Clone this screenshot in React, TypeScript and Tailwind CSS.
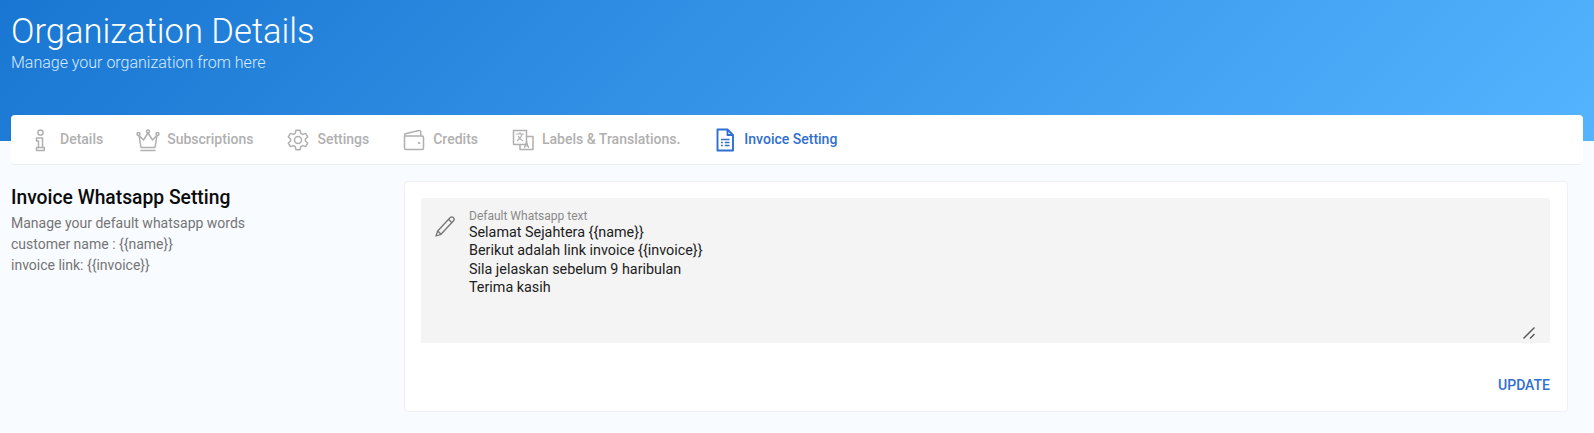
import React from "react";

const stroke = { fill: "none", stroke: "currentColor", strokeWidth: 1.5, strokeLinecap: "round" as const, strokeLinejoin: "round" as const };

const InfoIcon = () => (
  <svg width="24" height="24" viewBox="0 0 24 24" {...stroke}>
    <circle cx="11.500" cy="4.500" r="2.600" />
    <path d="M7.500 10h6v9.500h1.800v3H7.500v-3h2v-6.500h-2z" />
    <path d="M9.500 19.500h4" />
  </svg>
);
const CrownIcon = () => (
  <svg width="24" height="24" viewBox="0 0 24 24" {...stroke}>
    <circle cx="12" cy="3.500" r="1.500" />
    <circle cx="2.500" cy="6" r="1.500" />
    <circle cx="21.500" cy="6" r="1.500" />
    <path d="M12 5l-4.500 7L3 7.500 5 19.500h14l2-12L16.500 12 12 5z" />
    <path d="M5 22.500h14" />
  </svg>
);
const GearIcon = () => (
  <svg width="24" height="24" viewBox="0 0 24 24" {...stroke}>
    <path d="M9.900 2.300h4.200l.6 3 2 1.100 2.900-1 2.100 3.600-2.300 2v2l2.300 2-2.100 3.600-2.900-1-2 1.100-.6 3H9.900l-.6-3-2-1.100-2.900 1-2.100-3.600 2.300-2v-2l-2.300-2 2.100-3.600 2.900 1 2-1.100z" />
    <circle cx="12" cy="12" r="3.500" />
  </svg>
);
const WalletIcon = () => (
  <svg width="24" height="24" viewBox="0 0 24 24" {...stroke}>
    <path d="M2.500 8.500V20a1.500 1.500 0 0 0 1.500 1.500h16a1.500 1.500 0 0 0 1.500-1.500V9.500A1.500 1.500 0 0 0 20 8H4C3 8 2.500 7.500 2.500 7c0-.6.4-1 1-1.200L17 2.500c1-.2 1.800.4 1.800 1.500V8" />
    <path d="M16.800 15h.6" strokeWidth="2" />
  </svg>
);
const TranslateIcon = () => (
  <svg width="24" height="24" viewBox="0 0 24 24" {...stroke}>
    <path d="M2.500 2.500h13v14h-13z" />
    <path d="M9 16.500v5h13V8.500h-6.500" />
    <path d="M5.500 6h7M9 4.500V6M11 6c-.5 3-2.200 5-4.500 6.500M7.500 8.500c.7 1.800 2.300 3 4 4" strokeWidth="1.200" />
    <path d="M13.500 19.500l2-5.500 2 5.500M14.200 18h2.600" strokeWidth="1.200" />
  </svg>
);
const InvoiceIcon = () => (
  <svg width="24" height="24" viewBox="0 0 24 24" fill="none" stroke="currentColor" strokeWidth="1.900" strokeLinejoin="round">
    <path d="M4.500 1.500h10l5.500 5.500v15.500H4.500z" />
    <path d="M14.500 1.500V7H20" />
    <path d="M8 11.500h8.500M8 14.500h1.800M11.800 14.500h4.700M8 17.500h1.800M11.800 17.500h4.700" strokeWidth="1.500" />
  </svg>
);
const PencilIcon = () => (
  <svg width="24" height="24" viewBox="0 0 24 24" fill="none" stroke="currentColor" strokeWidth="1.300" strokeLinejoin="round">
    <path d="M17 2.700c1-1 2.500-1 3.400-.1s.9 2.400-.1 3.400L8 19.300 3 21 4.700 16z" />
    <path d="M15.500 4.300l3.300 3.300M4.700 16L8 19.300" />
  </svg>
);

const tabs = [
  { label: "Details", icon: <InfoIcon /> },
  { label: "Subscriptions", icon: <CrownIcon /> },
  { label: "Settings", icon: <GearIcon /> },
  { label: "Credits", icon: <WalletIcon /> },
  { label: "Labels & Translations.", icon: <TranslateIcon /> },
];

const Tab = ({ label, icon, active }: { label: string; icon: React.ReactNode; active?: boolean }) => (
  <div className={`flex h-full items-center gap-[7px] pr-[17px] pl-[16px] text-[14px] font-medium ${active ? "text-[#2f6fd0]" : "text-[#b0b0b0]"}`}>
    {icon}
    <span>{label}</span>
  </div>
);

export default function App() {
  return (
    <div className="min-h-[433px] overflow-hidden bg-[#f8fbff] font-['Roboto',sans-serif]">
      <header className="h-[141px] bg-[linear-gradient(135deg,#1976d2,#54b4ff)] px-[11px] pt-[9px] text-white">
        <h1 className="text-[34.6px] leading-[44px] font-light">Organization Details</h1>
        <p className="text-[16px] leading-[20px] font-light text-[#d8ecff]">Manage your organization from here</p>
      </header>

      <nav className="relative mx-[11px] -mt-[26px] flex h-[50px] items-center rounded-[4px] border-b border-[#e8edf2] bg-white px-[2px]">
        {tabs.map((t) => (
          <Tab key={t.label} label={t.label} icon={t.icon} />
        ))}
        <Tab label="Invoice Setting" icon={<InvoiceIcon />} active />
      </nav>

      <main className="mt-[16px] flex pr-[26px] pl-[11px]">
        <section className="w-[393px] shrink-0 pt-[4px]">
          <h2 className="text-[19.3px] leading-[26px] font-medium text-[#0b0b0b]">Invoice Whatsapp Setting</h2>
          <p className="mt-[2px] text-[14px] leading-[21px] text-[#757575]">
            Manage your default whatsapp words
            <br />
            customer name : {"{{name}}"}
            <br />
            invoice link: {"{{invoice}}"}
          </p>
        </section>

        <section className="h-[231px] flex-1 rounded-[4px] border border-[#eef1f5] bg-white pt-[16px] pr-[17px] pl-[16px]">
          <div className="flex h-[145px] rounded-t-[4px] bg-[#f4f4f4] pr-[14px] pl-[12px]">
            <div className="pt-[17px] text-[#757575]">
              <PencilIcon />
            </div>
            <div className="relative ml-[12px] flex-1 pt-[11px]">
              <label className="block text-[12px] leading-[14px] text-[#8a8a8a]">Default Whatsapp text</label>
              <div className="mt-[1px] text-[14.35px] leading-[18.300px] whitespace-pre text-[#212121]">
                {"Selamat Sejahtera {{name}}\nBerikut adalah link invoice {{invoice}}\nSila jelaskan sebelum 9 haribulan\nTerima kasih"}
              </div>
              <svg className="absolute right-0 bottom-[3px] text-[#555555]" width="14" height="14" viewBox="0 0 14 14" fill="none" stroke="currentColor" strokeWidth="1.400">
                <path d="M1.500 12.500L12.500 1.500M8 12.500l4.500-4.500" />
              </svg>
            </div>
          </div>
          <div className="mt-[32px] text-right text-[14px] leading-[20px] font-medium text-[#2f6fd0]">UPDATE</div>
        </section>
      </main>
    </div>
  );
}
